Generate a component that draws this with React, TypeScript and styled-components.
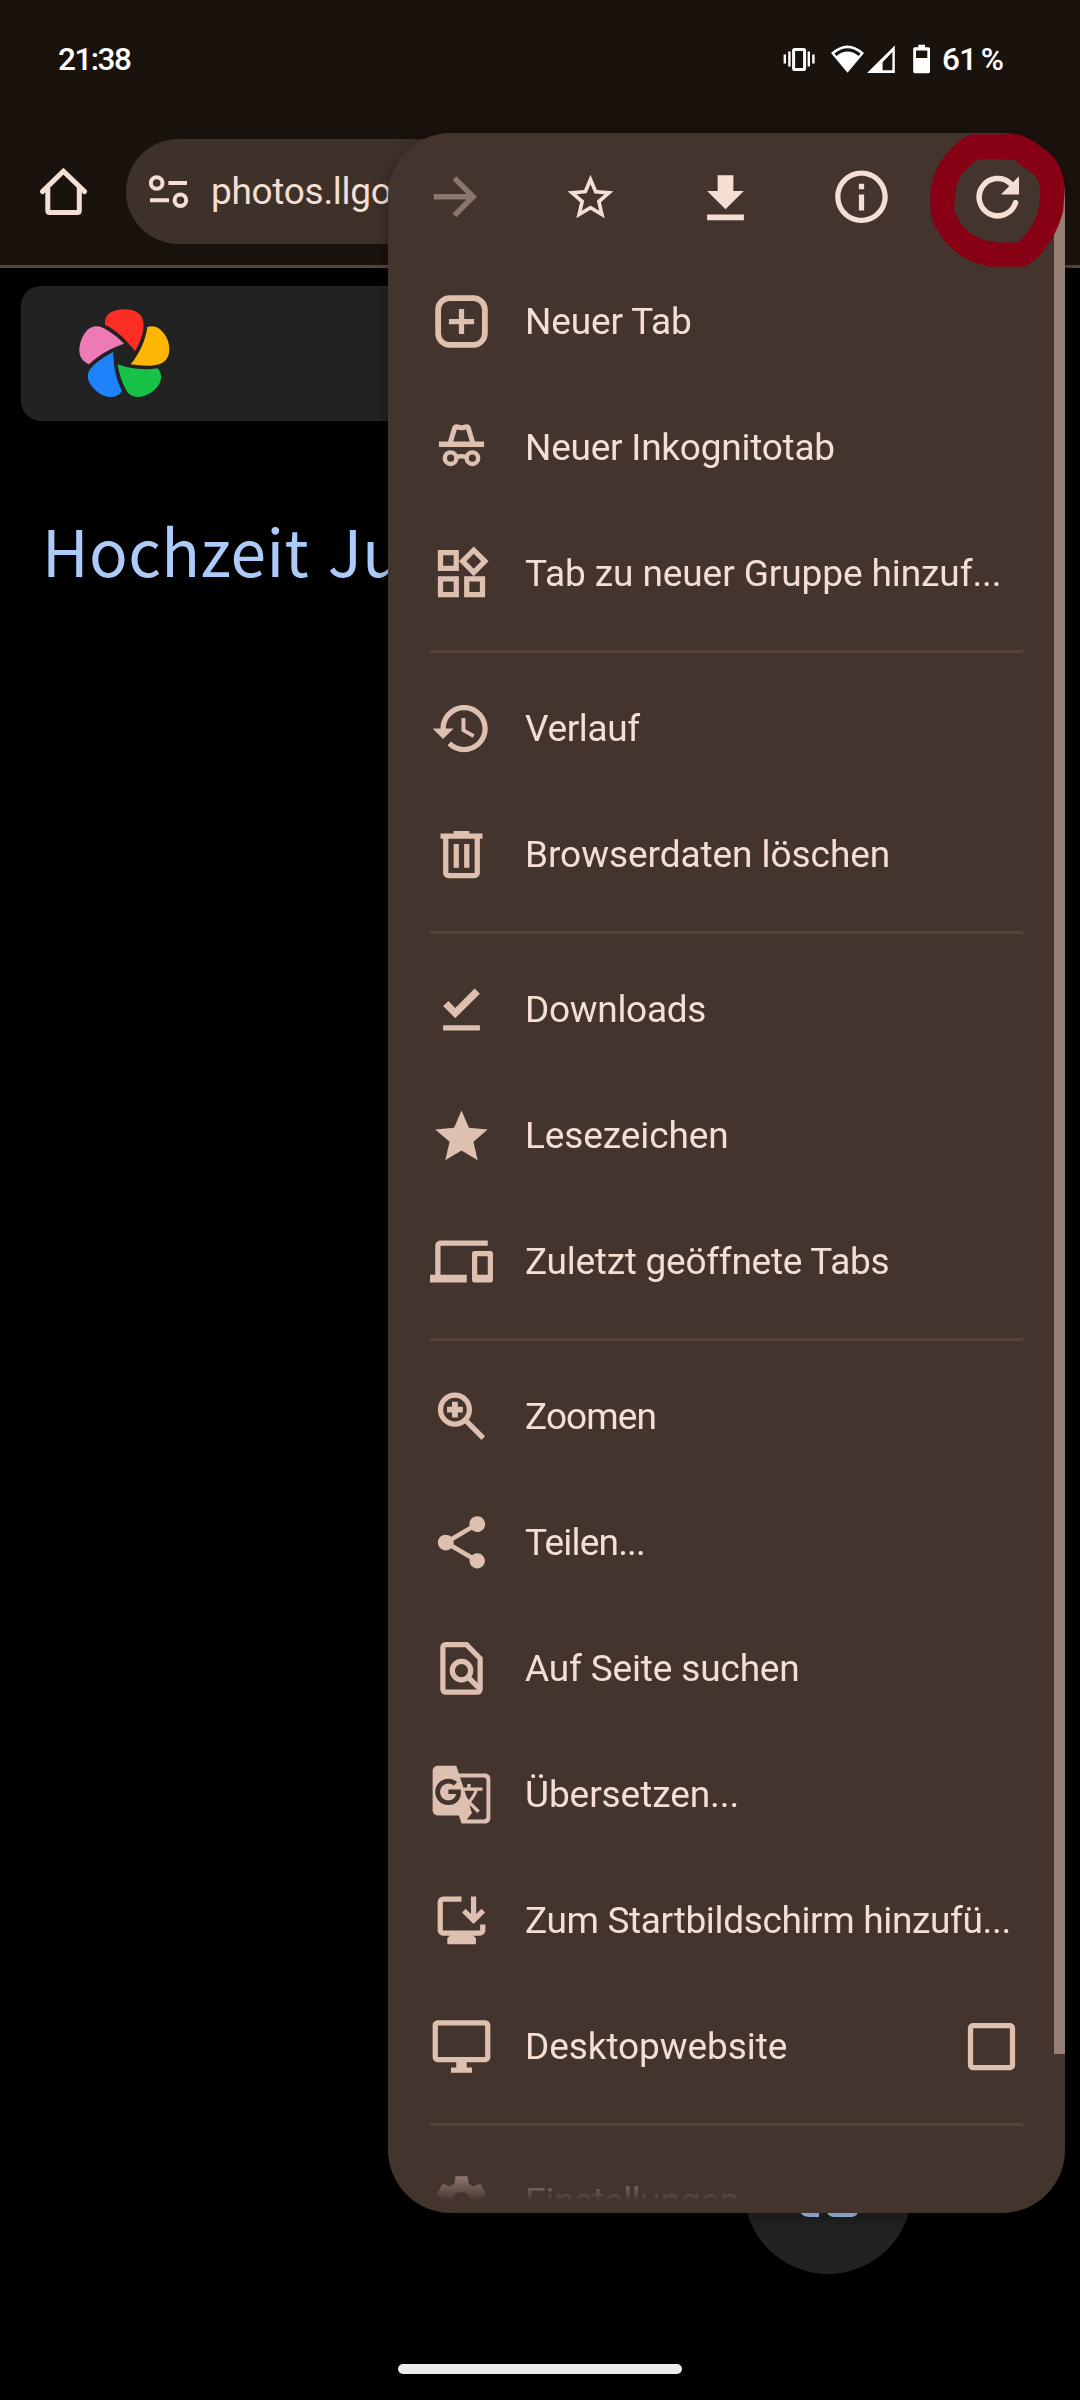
import React from 'react';
import styled, { createGlobalStyle } from 'styled-components';

const c = {
  chrome: '#1a120d',
  chromeLine: '#5a453b',
  pill: '#3e312a',
  menu: '#44342e',
  menuLine: '#564238',
  text: '#f5ded3',
  icon: '#dec0b1',
  scroll: '#957e73',
  marker: '#870014',
};

const GlobalStyle = createGlobalStyle`
  * { box-sizing: border-box; }
  body { margin: 0; background: #000; }
  svg { display: block; flex: none; }
`;

const Screen = styled.div`
  position: relative;
  width: 1080px;
  height: 2400px;
  overflow: hidden;
  display: flex;
  flex-direction: column;
  background: #000;
  font-family: Roboto, 'Noto Sans', sans-serif;
`;

const BrowserChrome = styled.header`
  height: 268px;
  background: ${c.chrome};
  border-bottom: 3px solid ${c.chromeLine};
`;

const StatusBar = styled.div`
  height: 118px;
  display: flex;
  align-items: center;
  justify-content: space-between;
  padding: 0 76px 0 58px;
  color: #fff;
  font-size: 31.5px;
  font-weight: 500;
`;

const Clock = styled.span`
  letter-spacing: -1.5px;
`;

const StatusIcons = styled.div`
  display: flex;
  align-items: center;
`;

const Battery = styled.span`
  width: 62px;
  margin-left: 11px;
  white-space: nowrap;
  letter-spacing: -0.6px;
  word-spacing: -3px;
`;

const Toolbar = styled.div`
  display: flex;
  align-items: center;
  height: 147px;
  gap: 32px;
  padding: 0 32px 0 31px;
`;

const AddressBar = styled.div`
  display: flex;
  align-items: center;
  gap: 22px;
  width: 700px;
  height: 105px;
  padding-left: 23px;
  border-radius: 53px;
  background: ${c.pill};
  color: ${c.text};
  font-size: 37px;
`;

const Address = styled.span`
  letter-spacing: -0.3px;
`;

const Page = styled.main`
  flex: 1;
  padding: 18px 21px 0;
`;

const SiteHeader = styled.div`
  display: flex;
  align-items: center;
  height: 135px;
  padding-left: 57px;
  border-radius: 20px;
  background: #222;
`;

const Title = styled.h1`
  margin: 88px 0 0 21px;
  font: 400 64px/80px 'Noto Sans CJK SC', 'Noto Sans', sans-serif;
  letter-spacing: 0.4px;
  word-spacing: 4px;
  white-space: nowrap;
  color: #adcbfa;
`;

const FloatingButton = styled.button`
  position: absolute;
  left: 744px;
  top: 2106px;
  width: 168px;
  height: 168px;
  padding: 0;
  border: 0;
  border-radius: 50%;
  background: #222;
  display: flex;
  align-items: center;
  justify-content: center;
`;

const GestureBar = styled.div`
  display: flex;
  justify-content: center;
  height: 36px;

  &::after {
    content: '';
    width: 284px;
    height: 10px;
    border-radius: 5px;
    background: #ebebeb;
  }
`;

const Menu = styled.nav`
  position: absolute;
  left: 388px;
  top: 133px;
  width: 677px;
  height: 2080px;
  padding-bottom: 12px;
  border-radius: 63px;
  overflow: hidden;
  background: ${c.menu};
`;

const MenuShadow = styled.div`
  position: absolute;
  left: 388px;
  top: 133px;
  width: 677px;
  height: 2080px;
  border-radius: 63px;
  box-shadow: 0 4px 16px rgba(0, 0, 0, 0.35);
`;

const MenuScroller = styled.div`
  height: 2068px;
  overflow: hidden;
  mask-image: linear-gradient(to bottom, #000 calc(100% - 50px), transparent 100%);
`;

const ActionRow = styled.div`
  display: grid;
  grid-template-columns: repeat(5, 1fr);
  height: 126px;
  margin-left: -1px;
`;

const Action = styled.div<{ $disabled?: boolean }>`
  display: flex;
  align-items: center;
  justify-content: center;
  color: ${(p) => (p.$disabled ? '#8a766c' : c.text)};
`;

const Group = styled.div`
  & + & {
    margin-top: 13px;
  }
  & + &::before {
    content: '';
    display: block;
    height: 3px;
    margin: 0 42px 13px;
    background: ${c.menuLine};
  }
`;

const Row = styled.div`
  display: flex;
  align-items: center;
  height: 126px;
  padding: 0 42px 2px;
  color: ${c.icon};
`;

const Label = styled.span<{ $tracking: number }>`
  flex: 1;
  margin-left: 32px;
  white-space: nowrap;
  color: ${c.text};
  font-size: 37px;
  letter-spacing: ${(p) => p.$tracking}px;
`;

const ScrollThumb = styled.div`
  position: absolute;
  right: 0;
  top: 0;
  width: 11px;
  height: 1921px;
  background: ${c.scroll};
`;

const Marker = styled.svg`
  position: absolute;
  left: 929px;
  top: 133px;
`;

const Icon = ({ children, size = 63 }: { children: React.ReactNode; size?: number }) => (
  <svg width={size} height={size} viewBox="0 0 24 24" fill="currentColor">
    {children}
  </svg>
);

const line = { fill: 'none', stroke: 'currentColor', strokeWidth: 2 } as const;

const icons = {
  newTab: (
    <g {...line}>
      <rect x="3.1" y="3.1" width="17.8" height="17.8" rx="4.4" strokeWidth="2.2" />
      <path d="M12 7.2v9.6M7.2 12h9.6" />
    </g>
  ),
  incognito: (
    <g {...line}>
      <path d="M3.4 10.8h17.2" strokeWidth="2.1" />
      <path
        d="M7.7 10.2 9.4 4.6c.15-.5.6-.6 1-.45 1 .42 2.2.42 3.2 0 .4-.15.85-.05 1 .45l1.7 5.6"
        strokeWidth="1.9"
      />
      <circle cx="7.85" cy="16.05" r="2.2" strokeWidth="1.7" />
      <circle cx="16.15" cy="16.05" r="2.2" strokeWidth="1.7" />
      <path d="M10 15.6q2-.5 4 0" strokeWidth="1.7" />
    </g>
  ),
  group: (
    <path d="M16.66 4.52l2.83 2.83-2.83 2.83-2.83-2.83 2.83-2.83M9 5v4H5V5h4m10 10v4h-4v-4h4M9 15v4H5v-4h4m7.66-13.31L11 7.34 16.66 13l5.66-5.66-5.66-5.65zM11 3H3v8h8V3zm10 10h-8v8h8v-8zm-10 0H3v8h8v-8z" />
  ),
  history: (
    <path d="M13 3c-4.97 0-9 4.03-9 9H1l3.89 3.89.07.14L9 12H6c0-3.87 3.13-7 7-7s7 3.13 7 7-3.13 7-7 7c-1.93 0-3.68-.79-4.94-2.06l-1.42 1.42C8.27 19.99 10.51 21 13 21c4.97 0 9-4.03 9-9s-4.03-9-9-9zm-1 5v5l4.28 2.54.72-1.21-3.5-2.08V8H12z" />
  ),
  trash: (
    <path
      fillRule="evenodd"
      d="M7 21q-.825 0-1.412-.587Q5 19.825 5 19V6H4V4h5V3h6v1h5v2h-1v13q0 .825-.587 1.413Q17.825 21 17 21ZM17 6H7v13h10ZM9 17h2V8H9Zm4 0h2V8h-2Z"
    />
  ),
  downloads: <path d="M5 18h14v2H5v-2zm4.6-2.7L5 10.7l2-1.9 2.6 2.6L17 4l2 2-9.4 9.3z" />,
  star: (
    <path d="M12 17.72l6.18 3.73-1.64-7.03L22 9.69l-7.19-.61L12 2.45 9.19 9.08 2 9.69l5.46 4.73-1.64 7.03z" />
  ),
  devices: (
    <path d="M4 6h18V4H4c-1.1 0-2 .9-2 2v11H0v3h14v-3H4V6zm19 2h-6c-.55 0-1 .45-1 1v10c0 .55.45 1 1 1h6c.55 0 1-.45 1-1V9c0-.55-.45-1-1-1zm-1 9h-4v-7h4v7z" />
  ),
  zoom: (
    <>
      <circle cx="9.5" cy="9.4" r="5.5" {...line} />
      <path d="M13.4 13.3l6.9 6.9" {...line} />
      <path d="M8.4 6.4h2.2v1.9h1.9v2.2h-1.9v1.9H8.4v-1.9H6.5V8.3h1.9z" />
    </>
  ),
  share: (
    <path d="M18 16.08c-.76 0-1.44.3-1.96.77L8.91 12.7c.05-.23.09-.46.09-.7s-.04-.47-.09-.7l7.05-4.11c.54.5 1.25.81 2.04.81 1.66 0 3-1.34 3-3s-1.34-3-3-3-3 1.34-3 3c0 .24.04.47.09.7L8.04 9.81C7.5 9.31 6.79 9 6 9c-1.66 0-3 1.34-3 3s1.34 3 3 3c.79 0 1.5-.31 2.04-.81l7.12 4.16c-.05.21-.08.43-.08.65 0 1.61 1.31 2.92 2.92 2.92s2.92-1.31 2.92-2.92-1.31-2.92-2.92-2.92z" />
  ),
  find: (
    <g {...line}>
      <path d="M13.9 2.9H6a1.1 1.1 0 0 0-1.1 1.1v15.9A1.1 1.1 0 0 0 6 21h12a1.1 1.1 0 0 0 1.1-1.1V8.2z" />
      <circle cx="12" cy="12.8" r="3.5" />
      <path d="M14.4 15.2l4.2 4.2" />
    </g>
  ),
  translate: (
    <path d="M21 4H11l-1-3H3c-1.1 0-2 .9-2 2v15c0 1.1.9 2 2 2h8l1 3h9c1.1 0 2-.9 2-2V6c0-1.1-.9-2-2-2zM7 16c-2.76 0-5-2.24-5-5s2.24-5 5-5c1.35 0 2.48.5 3.35 1.3L9.03 8.57c-.38-.36-1.04-.78-2.03-.78-1.74 0-3.15 1.44-3.15 3.21S5.26 14.21 7 14.21c2.01 0 2.84-1.44 2.92-2.41H7v-1.71h4.68c.07.31.12.61.12 1.02C11.8 13.97 9.89 16 7 16zm6.17-5.42h3.7c-.43 1.25-1.11 2.43-2.05 3.47-.31-.35-.6-.72-.86-1.1l-.79-2.37zm8.33 9.92c0 .55-.45 1-1 1H14l2-2.5-1.04-3.1 3.1 3.1.92-.92-3.3-3.25.02-.02c1.13-1.25 1.93-2.69 2.4-4.22H20v-1.3h-4.53V8h-1.29v1.29h-1.44L11.46 5.5h9.04c.55 0 1 .45 1 1v14z" />
  ),
  install: (
    <>
      <path
        d="M12 3.9H5A1.1 1.1 0 0 0 3.9 5v10.7A1.1 1.1 0 0 0 5 16.8h14a1.1 1.1 0 0 0 1.1-1.1v-2.2M16.6 2.9v8.6M12.9 8.2l3.7 3.7 3.7-3.7"
        {...line}
      />
      <path d="M7.8 17.5h8.6l1.1 1.3V21H6.6v-2.2z" />
    </>
  ),
  desktop: (
    <path d="M21 2H3c-1.1 0-2 .9-2 2v12c0 1.1.9 2 2 2h7v2H8v2h8v-2h-2v-2h7c1.1 0 2-.9 2-2V4c0-1.1-.9-2-2-2zm0 14H3V4h18v12z" />
  ),
  settings: (
    <path d="M19.14 12.94c.04-.3.06-.61.06-.94 0-.32-.02-.64-.07-.94l2.03-1.58c.18-.14.23-.41.12-.61l-1.92-3.32c-.12-.22-.37-.29-.59-.22l-2.39.96c-.5-.38-1.03-.7-1.62-.94l-.36-2.54c-.04-.24-.24-.41-.48-.41h-3.84c-.24 0-.43.17-.47.41l-.36 2.54c-.59.24-1.13.57-1.62.94l-2.39-.96c-.22-.08-.47 0-.59.22L2.74 8.87c-.12.21-.08.47.12.61l2.03 1.58c-.05.3-.09.63-.09.94s.02.64.07.94l-2.03 1.58c-.18.14-.23.41-.12.61l1.92 3.32c.12.22.37.29.59.22l2.39-.96c.5.38 1.03.7 1.62.94l.36 2.54c.05.24.24.41.48.41h3.84c.24 0 .44-.17.47-.41l.36-2.54c.59-.24 1.13-.56 1.62-.94l2.39.96c.22.08.47 0 .59-.22l1.92-3.32c.12-.22.07-.47-.12-.61l-2.01-1.58zM12 15.6c-1.98 0-3.6-1.62-3.6-3.6s1.62-3.6 3.6-3.6 3.6 1.62 3.6 3.6-1.62 3.6-3.6 3.6z" />
  ),
  checkbox: (
    <path d="M19 5v14H5V5h14m0-2H5c-1.1 0-2 .9-2 2v14c0 1.1.9 2 2 2h14c1.1 0 2-.9 2-2V5c0-1.1-.9-2-2-2z" />
  ),
};

type Item = { icon: keyof typeof icons; label: string; tracking: number; checkbox?: boolean };

const groups: Item[][] = [
  [
    { icon: 'newTab', label: 'Neuer Tab', tracking: -0.15 },
    { icon: 'incognito', label: 'Neuer Inkognitotab', tracking: -0.24 },
    { icon: 'group', label: 'Tab zu neuer Gruppe hinzuf...', tracking: -0.09 },
  ],
  [
    { icon: 'history', label: 'Verlauf', tracking: -0.35 },
    { icon: 'trash', label: 'Browserdaten löschen', tracking: -0.06 },
  ],
  [
    { icon: 'downloads', label: 'Downloads', tracking: -0.3 },
    { icon: 'star', label: 'Lesezeichen', tracking: -0.1 },
    { icon: 'devices', label: 'Zuletzt geöffnete Tabs', tracking: -0.26 },
  ],
  [
    { icon: 'zoom', label: 'Zoomen', tracking: -0.9 },
    { icon: 'share', label: 'Teilen...', tracking: -0.8 },
    { icon: 'find', label: 'Auf Seite suchen', tracking: -0.16 },
    { icon: 'translate', label: 'Übersetzen...', tracking: -0.08 },
    { icon: 'install', label: 'Zum Startbildschirm hinzufü...', tracking: -0.35 },
    { icon: 'desktop', label: 'Desktopwebsite', tracking: -0.08, checkbox: true },
  ],
  [{ icon: 'settings', label: 'Einstellungen', tracking: -0.5 }],
];

const StatusGlyphs = () => (
  <svg width="148" height="30" viewBox="783 44.5 148 30" fill="#fff">
    <rect x="793.6" y="50" width="11" height="20" rx="1" fill="none" stroke="#fff" strokeWidth="3" />
    <path d="M784.8 55v9M789.4 52v15M808.8 52v15M813.4 55v9" stroke="#fff" strokeWidth="2.4" />
    <path fillRule="evenodd" d="M831 53.6q16.5-15.2 33 0L847.5 73.2zM834.4 54l2 2.4q11.1-8.6 22.2 0l2-2.4q-13.1-10.6-26.2 0z" />
    <path fillRule="evenodd" d="M894.8 46v27.4H867zM892.4 52.5l-9.8 10.3v8h9.8z" />
    <path fillRule="evenodd" d="M918.3 45.2h6.7v2.5h3.4q1.6 0 1.6 1.6v22.8q0 1.6-1.6 1.6h-13.6q-1.6 0-1.6-1.6V49.3q0-1.6 1.6-1.6h3.5zM916 51v7.6h11.3V51z" />
  </svg>
);

const HomeIcon = () => (
  <svg width="63" height="63" viewBox="31 160 63 63" fill="none" stroke={c.text} strokeWidth="5">
    <path d="M42.4 191.6l21-20.4 21.2 20.4" strokeLinecap="round" />
    <path d="M47.8 188v22.5q0 2 2 2h27.5q2 0 2-2V188" />
  </svg>
);

const SiteInfoIcon = () => (
  <svg width="40" height="36" viewBox="149 174 40 36" fill="none" stroke={c.text} strokeWidth="4">
    <circle cx="156.7" cy="183" r="5.8" />
    <circle cx="180.4" cy="200.2" r="5.8" />
    <path d="M168.4 183H187M150 200.2h19" />
  </svg>
);

const PhotosLogo = () => (
  <svg width="93.3" height="90.7" viewBox="235 113 280 272">
    <path fill="#fc2d25" d="M316 163C313 132 338 117 374 117C410 117 432 135 432 162C432 190 421 218 406 243C385 212 350 180 316 163Z" />
    <path fill="#ffb602" d="M443 170C456 166 470 167 480 176C500 193 510 215 509 240C508 268 490 284 455 286C435 287 412 285 393 282C418 252 438 212 443 170Z" />
    <path fill="#18c249" d="M354 282C385 295 435 300 474 294C484 304 487 320 482 334C473 358 442 380 414 380C395 379 385 370 378 356C366 335 358 308 354 282Z" />
    <path fill="#1e83fb" d="M341 245C340 285 350 328 367 362C358 376 344 382 328 380C300 377 272 350 265 326C262 308 270 296 285 282C302 268 322 254 341 245Z" />
    <path fill="#ed79b5" d="M373 220C335 232 295 256 268 282C248 273 238 258 239 236C241 205 260 173 280 169C296 165 312 172 325 181C343 192 360 206 373 220Z" />
  </svg>
);

export default function App() {
  return (
    <Screen>
      <GlobalStyle />
      <BrowserChrome>
        <StatusBar>
          <Clock>21:38</Clock>
          <StatusIcons>
            <StatusGlyphs />
            <Battery>61 %</Battery>
          </StatusIcons>
        </StatusBar>
        <Toolbar>
          <HomeIcon />
          <AddressBar>
            <SiteInfoIcon />
            <Address>photos.llgo</Address>
          </AddressBar>
        </Toolbar>
      </BrowserChrome>
      <Page>
        <SiteHeader>
          <PhotosLogo />
        </SiteHeader>
        <Title>Hochzeit Ju</Title>
      </Page>
      <GestureBar />

      <FloatingButton>
        <svg width="64" height="56" viewBox="0 0 64 56" fill="#adcbfa">
          <path d="M4 8q0-8 8-8h11v55H14Q4 55 4 47z" />
          <rect x="30" y="0" width="33" height="55" rx="8" />
        </svg>
      </FloatingButton>

      <MenuShadow />
      <Menu>
        <MenuScroller>
          <ActionRow>
            <Action $disabled>
              <Icon>
                <path d="M4.1 12.1h14.5M12 5l7.1 7.1L12 19.2" {...line} strokeWidth="2.1" />
              </Icon>
            </Action>
            <Action>
              <Icon size={55}>
                <path d="M22 9.74l-7.19-.62L12 2.5 9.19 9.13 2 9.74l5.46 4.73-1.64 7.03L12 17.77l6.18 3.73-1.63-7.03L22 9.74zM12 15.9l-3.76 2.27 1-4.28-3.32-2.88 4.38-.38L12 6.6l1.71 4.04 4.38.38-3.32 2.88 1 4.28L12 15.9z" />
              </Icon>
            </Action>
            <Action>
              <Icon>
                <path d="M19 9.9h-4V3.9H9v6H5l7 7 7-7zM5 18.9v2.1h14v-2.1H5z" />
              </Icon>
            </Action>
            <Action>
              <Icon>
                <path d="M11 7.1h2v2.1h-2zm0 4.1h2v6.1h-2zm1-9.1C6.48 2.1 2 6.58 2 12.1s4.48 10 10 10 10-4.48 10-10-4.48-10-10-10zm0 18c-4.41 0-8-3.59-8-8s3.59-8 8-8 8 3.59 8 8-3.59 8-8 8z" />
              </Icon>
            </Action>
            <Action>
              <Icon>
                <path d="M18.9 14.3A7.1 7.1 0 1 1 17 7.1" {...line} strokeLinecap="round" strokeWidth="2.1" />
                <path d="M20.2 4.3v6.9h-6.9z" />
              </Icon>
            </Action>
          </ActionRow>
          {groups.map((items) => (
            <Group key={items[0].label}>
              {items.map((item) => (
                <Row key={item.label}>
                  <Icon>{icons[item.icon]}</Icon>
                  <Label $tracking={item.tracking}>{item.label}</Label>
                  {item.checkbox && <Icon>{icons.checkbox}</Icon>}
                </Row>
              ))}
            </Group>
          ))}
        </MenuScroller>
        <ScrollThumb />
      </Menu>

      <Marker width="137" height="135" viewBox="1130 398 398 406" preserveAspectRatio="none">
        <path
          fill={c.marker}
          fillRule="evenodd"
          d="M1260 402L1390 402Q1420 412 1440 428L1470 450Q1498 472 1510 500Q1524 530 1524 575L1520 630Q1512 670 1485 720L1465 750Q1440 785 1405 800L1310 800Q1255 790 1220 765Q1185 740 1160 700Q1134 665 1134 620L1134 570Q1142 520 1165 482Q1185 450 1210 428Q1235 405 1260 402ZM1280 476Q1262 480 1245 500L1222 525Q1205 560 1205 595L1203 625Q1208 655 1235 685Q1258 708 1290 720L1325 727L1385 727Q1405 715 1420 690Q1445 655 1450 610L1453 575Q1452 540 1435 522L1400 497L1378 479L1350 478L1335 476Z"
        />
      </Marker>
    </Screen>
  );
}
